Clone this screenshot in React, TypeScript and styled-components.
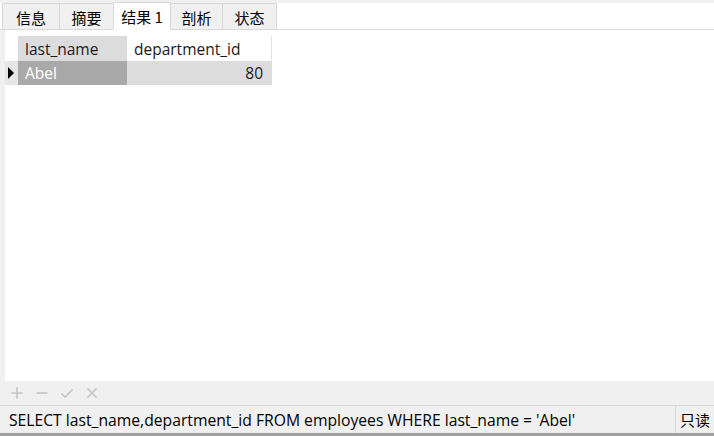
import React from "react";
import styled, { createGlobalStyle } from "styled-components";

const GlobalStyle = createGlobalStyle`
  html, body {
    margin: 0;
    padding: 0;
    background: #f0f0f0;
  }
  body {
    font-family: "Segoe UI", "Open Sans", "Noto Sans CJK SC", sans-serif;
    color: #000;
  }
`;

const Window = styled.div`
  width: 714px;
  height: 436px;
  display: flex;
  flex-direction: column;
  background: #f0f0f0;
  overflow: hidden;
`;

const TabBar = styled.div`
  height: 30px;
  box-sizing: border-box;
  padding-top: 4px;
  padding-left: 3px;
  display: flex;
  align-items: flex-end;
  background: linear-gradient(#f0f0f0 0 3px, #fff 3px);
  border-bottom: 1px solid #d9d9d9;
`;

const Tab = styled.div<{ $active?: boolean; $w: number }>`
  width: ${(p) => p.$w}px;
  height: ${(p) => (p.$active ? 28 : 26)}px;
  box-sizing: border-box;
  margin-bottom: ${(p) => (p.$active ? -1 : 0)}px;
  margin-left: -1px;
  display: flex;
  align-items: center;
  justify-content: center;
  padding-top: 1px;
  font-family: "Noto Sans CJK SC", sans-serif;
  font-size: 15px;
  color: #000;
  background: ${(p) => (p.$active ? "#fff" : "#f0f0f0")};
  border: 1px solid #d9d9d9;
  border-bottom: ${(p) => (p.$active ? "1px solid #fff" : "none")};
  position: relative;
  z-index: ${(p) => (p.$active ? 1 : 0)};
`;

const Body = styled.div`
  flex: 1;
  display: flex;
  min-height: 0;
`;

const LeftStrip = styled.div`
  width: 5px;
  background: #f0f0f0;
`;

const Content = styled.div`
  flex: 1;
  background: #fff;
  padding-top: 6px;
`;

const Grid = styled.div`
  display: grid;
  grid-template-columns: 13px 109px 145px;
  grid-template-rows: 25px 24px;
  width: 268px;
  font-family: "Segoe UI", "Open Sans", "Noto Sans", sans-serif;
  font-size: 15.5px;
`;

const Corner = styled.div`
  background: #fff;
`;

const HeadCell = styled.div<{ $selected?: boolean }>`
  display: flex;
  align-items: center;
  padding-left: 7px;
  background: ${(p) => (p.$selected ? "#dcdcdc" : "#fff")};
  border-right: ${(p) => (p.$selected ? "none" : "1px solid #e3e3e3")};
  color: #1a1a1a;
`;

const Indicator = styled.div`
  background: #e6e6e6;
  display: flex;
  align-items: center;
  padding-left: 3px;
`;

const Triangle = styled.div`
  width: 0;
  height: 0;
  border-top: 6px solid transparent;
  border-bottom: 6px solid transparent;
  border-left: 6px solid #000;
`;

const DataCell = styled.div<{ $focused?: boolean; $right?: boolean }>`
  display: flex;
  align-items: center;
  justify-content: ${(p) => (p.$right ? "flex-end" : "flex-start")};
  padding: 0 9px 0 7px;
  background: ${(p) => (p.$focused ? "#a9a9a9" : "#dcdcdc")};
  color: ${(p) => (p.$focused ? "#fff" : "#1a1a1a")};
`;

const Toolbar = styled.div`
  height: 24px;
  display: flex;
  align-items: center;
  gap: 11px;
  padding-left: 10px;
  background: #f0f0f0;
`;

const ToolIcon = styled.svg`
  width: 14px;
  height: 14px;
  stroke: #c3c3c3;
  stroke-width: 1.6;
  fill: none;
`;

const StatusBar = styled.div`
  height: 31px;
  box-sizing: border-box;
  display: flex;
  align-items: center;
  border-top: 1px solid #d7d7d7;
  border-bottom: 3px solid #a0a0a0;
  background: #f0f0f0;
  font-family: "Segoe UI", "Open Sans", "Noto Sans", "Noto Sans CJK SC", sans-serif;
  font-size: 15.7px;
`;

const StatusText = styled.div`
  flex: 1;
  padding-left: 9px;
  white-space: nowrap;
  color: #000;
`;

const StatusBadge = styled.div`
  width: 39px;
  height: 100%;
  box-sizing: border-box;
  border-left: 1px solid #d7d7d7;
  display: flex;
  align-items: center;
  padding-left: 4px;
  font-family: "Noto Sans CJK SC", sans-serif;
  font-size: 15px;
`;

const tabs = [
  { label: "信息", w: 58 },
  { label: "摘要", w: 55 },
  { label: "结果 1", w: 58, active: true },
  { label: "剖析", w: 53 },
  { label: "状态", w: 55 },
];

export default function App() {
  return (
    <Window>
      <GlobalStyle />
      <TabBar>
        {tabs.map((t) => (
          <Tab key={t.label} $w={t.w} $active={t.active}>
            {t.label}
          </Tab>
        ))}
      </TabBar>
      <Body>
        <LeftStrip />
        <Content>
          <Grid>
            <Corner />
            <HeadCell $selected>last_name</HeadCell>
            <HeadCell>department_id</HeadCell>
            <Indicator>
              <Triangle />
            </Indicator>
            <DataCell $focused>Abel</DataCell>
            <DataCell $right>80</DataCell>
          </Grid>
        </Content>
      </Body>
      <Toolbar>
        <ToolIcon viewBox="0 0 14 14">
          <path d="M7 1.5v11M1.5 7h11" />
        </ToolIcon>
        <ToolIcon viewBox="0 0 14 14">
          <path d="M1.5 7h11" />
        </ToolIcon>
        <ToolIcon viewBox="0 0 14 14">
          <path d="M1.5 7.5l3.5 3.5 7.5-7.5" />
        </ToolIcon>
        <ToolIcon viewBox="0 0 14 14">
          <path d="M2.5 2.5l9 9M11.5 2.5l-9 9" />
        </ToolIcon>
      </Toolbar>
      <StatusBar>
        <StatusText>
          SELECT last_name,department_id FROM employees WHERE last_name = 'Abel'
        </StatusText>
        <StatusBadge>只读</StatusBadge>
      </StatusBar>
    </Window>
  );
}
